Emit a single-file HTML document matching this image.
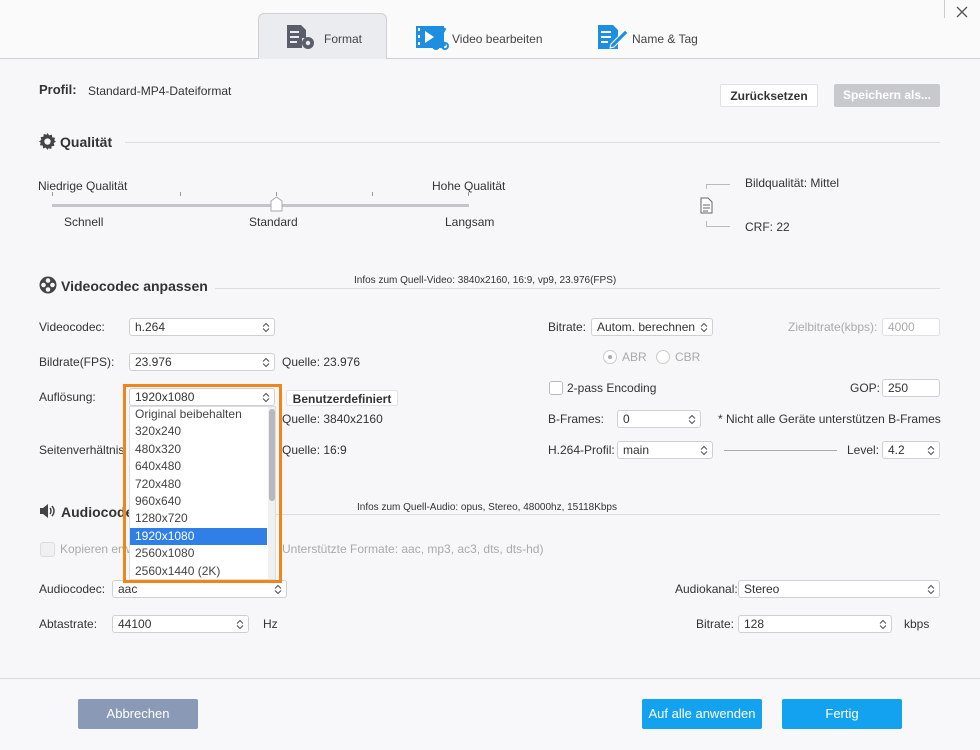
<!DOCTYPE html>
<html><head><meta charset="utf-8"><style>
*{margin:0;padding:0;box-sizing:border-box}
body{width:980px;height:750px;background:#f7f7f9;font-family:"Liberation Sans",sans-serif;font-size:12px;color:#333;position:relative;overflow:hidden}
.a{position:absolute;white-space:nowrap}
.t{position:absolute;white-space:nowrap;line-height:14px}
.sel{position:absolute;background:#fff;border:1px solid #cfd0d4;border-radius:3px;height:18px;line-height:16px;padding-left:5px;font-size:12px;color:#333}
.ar{position:absolute;right:4px;top:3px;width:8px;height:11px}
.h{position:absolute;font-size:14px;font-weight:bold;color:#333;white-space:nowrap}
.line{position:absolute;height:1px;background:#dcdde0}
.btn{position:absolute;color:#fff;text-align:center;font-size:13px;border-radius:2px}
.g{color:#aaa}
.item{height:17.4px;line-height:17.4px;padding-left:5px;font-size:12px;color:#444}
</style></head><body>
<svg width="0" height="0" style="position:absolute"><defs><symbol id="ud" viewBox="0 0 8 11"><path d="M1 4.5L4 1.5 7 4.5M1 6.5L4 9.5 7 6.5" stroke="#555" stroke-width="1.1" fill="none"/></symbol></defs></svg>
<div class="a" style="left:0;top:0;width:980px;height:58px;background:#fafafa"></div>
<div class="line" style="left:0;top:58px;width:980px;background:#d0d0d4"></div>
<div class="a" style="left:258px;top:13px;width:129px;height:46px;background:#ebecef;border:1px solid #d0d0d4;border-bottom:none;border-radius:6px 6px 0 0"></div>
<svg class="a" style="left:286px;top:24px" width="30" height="26" viewBox="0 0 30 26"><path d="M1 1h14l5 5v8h-4v10H1z" fill="#5a5e6b"/><rect x="4" y="7" width="9" height="2" fill="#ebecef"/><rect x="4" y="12" width="9" height="2" fill="#ebecef"/><rect x="4" y="17" width="7" height="2" fill="#ebecef"/><circle cx="22" cy="19" r="6" fill="#5a5e6b"/><circle cx="22" cy="19" r="2.2" fill="#ebecef"/></svg>
<div class="t" style="left:324px;top:32px;color:#444">Format</div>
<svg class="a" style="left:415px;top:24px" width="34" height="26" viewBox="0 0 34 26"><rect x="1" y="2" width="28" height="22" fill="#1e8fe0"/><rect x="3" y="4" width="2" height="3" fill="#fff"/><rect x="3" y="11" width="2" height="3" fill="#fff"/><rect x="3" y="18" width="2" height="3" fill="#fff"/><path d="M10 7l9 6-9 6z" fill="#fff"/><path d="M20 4l10 18M30 4L20 22" stroke="#1e8fe0" stroke-width="3" fill="none"/><circle cx="21" cy="22" r="3" fill="none" stroke="#1e8fe0" stroke-width="2"/><circle cx="30" cy="22" r="3" fill="none" stroke="#1e8fe0" stroke-width="2"/></svg>
<div class="t" style="left:452px;top:32px;color:#444">Video bearbeiten</div>
<svg class="a" style="left:597px;top:24px" width="32" height="26" viewBox="0 0 32 26"><path d="M1 1h15l5 5v19H1z" fill="#1e8fe0"/><rect x="4" y="7" width="10" height="2" fill="#fff"/><rect x="4" y="12" width="10" height="2" fill="#fff"/><rect x="4" y="17" width="7" height="2" fill="#fff"/><path d="M14 20l14-14 3 3-14 14-4 1z" fill="#1e8fe0" stroke="#fff" stroke-width="1"/></svg>
<div class="t" style="left:632px;top:32px;color:#444">Name &amp; Tag</div>
<div class="a" style="left:944px;top:0;width:1px;height:18px;background:#ccc"></div>
<svg class="a" style="left:956px;top:6px" width="12" height="12"><path d="M1 1l10 10M11 1L1 11" stroke="#555" stroke-width="1.3"/></svg>

<div class="t" style="left:39px;top:83px;font-size:13px;font-weight:bold">Profil:</div>
<div class="t" style="left:88px;top:84px">Standard-MP4-Dateiformat</div>
<div class="btn" style="left:720px;top:84px;width:98px;height:23px;line-height:23px;background:#fff;color:#333;font-weight:bold;font-size:12px;border:1px solid #e2e2e6">Zurücksetzen</div>
<div class="btn" style="left:834px;top:84px;width:106px;height:23px;line-height:23px;background:#c8c9cd;font-weight:bold;font-size:12px">Speichern als...</div>

<svg class="a" style="left:39px;top:133px" width="17" height="17" viewBox="0 0 16 16"><path d="M8 0l1.5 2.2 2.6-.7.4 2.6 2.6.4-.7 2.6L16 8l-2.2 1.5.7 2.6-2.6.4-.4 2.6-2.6-.7L8 16l-1.5-2.2-2.6.7-.4-2.6-2.6-.4.7-2.6L0 8l2.2-1.5-.7-2.6 2.6-.4.4-2.6 2.6.7z" fill="#444"/><circle cx="8" cy="8" r="3" fill="#f7f7f9"/></svg>
<div class="h" style="left:60px;top:134px">Qualität</div>
<div class="line" style="left:125px;top:142px;width:815px"></div>
<div class="t" style="left:38px;top:179px">Niedrige Qualität</div>
<div class="t" style="left:432px;top:179px">Hohe Qualität</div>
<div class="a" style="left:52px;top:192px;width:1px;height:4px;background:#999"></div>
<div class="a" style="left:180px;top:192px;width:1px;height:4px;background:#999"></div>
<div class="a" style="left:276px;top:192px;width:1px;height:4px;background:#999"></div>
<div class="a" style="left:372px;top:192px;width:1px;height:4px;background:#999"></div>
<div class="a" style="left:468px;top:192px;width:1px;height:4px;background:#999"></div>
<div class="a" style="left:52px;top:204px;width:417px;height:3px;background:#c4c5c9"></div>
<svg class="a" style="left:270px;top:196px" width="13" height="16"><path d="M1 5l5.5-4 5.5 4v10H1z" fill="#fff" stroke="#aaa"/></svg>
<div class="t" style="left:64px;top:215px">Schnell</div>
<div class="t" style="left:249px;top:215px">Standard</div>
<div class="t" style="left:445px;top:215px">Langsam</div>
<div class="a" style="left:706px;top:184px;width:24px;height:1px;background:#bbb"></div>
<div class="a" style="left:706px;top:184px;width:1px;height:5px;background:#bbb"></div>
<div class="a" style="left:706px;top:226px;width:24px;height:1px;background:#bbb"></div>
<div class="a" style="left:706px;top:221px;width:1px;height:5px;background:#bbb"></div>
<svg class="a" style="left:700px;top:197px" width="13" height="17"><path d="M1 1h7l4 4v11H1z" fill="#fff" stroke="#666"/><path d="M3 8h7M3 11h7M3 14h5" stroke="#666"/></svg>
<div class="t" style="left:745px;top:176px">Bildqualität: Mittel</div>
<div class="t" style="left:745px;top:220px">CRF: 22</div>

<svg class="a" style="left:39px;top:276px" width="18" height="18" viewBox="0 0 18 18"><circle cx="9" cy="9" r="8.5" fill="#444"/><circle cx="9" cy="4.5" r="2.3" fill="#f7f7f9"/><circle cx="9" cy="13.5" r="2.3" fill="#f7f7f9"/><circle cx="4.5" cy="9" r="2.3" fill="#f7f7f9"/><circle cx="13.5" cy="9" r="2.3" fill="#f7f7f9"/></svg>
<div class="h" style="left:61px;top:278px">Videocodec anpassen</div>
<div class="line" style="left:215px;top:288px;width:725px"></div>
<div class="t" style="left:354px;top:274px;font-size:10px">Infos zum Quell-Video: 3840x2160, 16:9, vp9, 23.976(FPS)</div>

<div class="t" style="left:39px;top:320px">Videocodec:</div>
<div class="sel" style="left:129px;top:318px;width:146px">h.264<svg class="ar"><use href="#ud"/></svg></div>
<div class="t" style="left:39px;top:355px">Bildrate(FPS):</div>
<div class="sel" style="left:129px;top:353px;width:146px">23.976<svg class="ar"><use href="#ud"/></svg></div>
<div class="t" style="left:282px;top:355px">Quelle: 23.976</div>
<div class="t" style="left:39px;top:390px">Auflösung:</div>
<div class="btn" style="left:286px;top:390px;width:112px;height:16px;line-height:16px;background:#fff;color:#333;font-weight:bold;font-size:12px;border:1px solid #e2e2e6">Benutzerdefiniert</div>
<div class="t" style="left:282px;top:412px">Quelle: 3840x2160</div>
<div class="t" style="left:39px;top:443px">Seitenverhältnis</div>
<div class="t" style="left:282px;top:443px">Quelle: 16:9</div>

<div class="t" style="left:548px;top:320px">Bitrate:</div>
<div class="sel" style="left:591px;top:318px;width:122px">Autom. berechnen<svg class="ar"><use href="#ud"/></svg></div>
<div class="t g" style="left:788px;top:320px">Zielbitrate(kbps):</div>
<div class="sel g" style="left:882px;top:318px;width:58px;border-color:#e0e0e4">4000</div>
<div class="a" style="left:603px;top:350px;width:14px;height:14px;border:1px solid #ccc;border-radius:50%;background:#fff"></div>
<div class="a" style="left:608px;top:355px;width:4px;height:4px;border-radius:50%;background:#aaa"></div>
<div class="t g" style="left:622px;top:350px">ABR</div>
<div class="a" style="left:656px;top:350px;width:14px;height:14px;border:1px solid #ccc;border-radius:50%;background:#fff"></div>
<div class="t g" style="left:675px;top:350px">CBR</div>
<div class="a" style="left:549px;top:381px;width:14px;height:14px;border:1px solid #bbb;border-radius:3px;background:#fff"></div>
<div class="t" style="left:567px;top:381px">2-pass Encoding</div>
<div class="t" style="left:850px;top:381px">GOP:</div>
<div class="sel" style="left:882px;top:379px;width:58px">250</div>
<div class="t" style="left:548px;top:412px">B-Frames:</div>
<div class="sel" style="left:617px;top:410px;width:84px">0<svg class="ar"><use href="#ud"/></svg></div>
<div class="t" style="left:718px;top:412px">* Nicht alle Geräte unterstützen B-Frames</div>
<div class="t" style="left:548px;top:443px">H.264-Profil:</div>
<div class="sel" style="left:617px;top:441px;width:96px">main<svg class="ar"><use href="#ud"/></svg></div>
<div class="a" style="left:724px;top:450px;width:113px;height:1px;background:#aaa"></div>
<div class="t" style="left:847px;top:443px">Level:</div>
<div class="sel" style="left:882px;top:441px;width:58px">4.2<svg class="ar"><use href="#ud"/></svg></div>

<svg class="a" style="left:39px;top:503px" width="18" height="16" viewBox="0 0 18 16"><path d="M1 5h3l5-4v14l-5-4H1z" fill="#444"/><path d="M11 5q2 3 0 6M13 3q4 5 0 10" stroke="#444" stroke-width="1.5" fill="none"/></svg>
<div class="h" style="left:61px;top:504px">Audiocodec</div>
<div class="line" style="left:200px;top:514px;width:740px"></div>
<div class="t" style="left:357px;top:501px;font-size:10px">Infos zum Quell-Audio: opus, Stereo, 48000hz, 15118Kbps</div>
<div class="a" style="left:40px;top:542px;width:15px;height:15px;border:1px solid #ddd;border-radius:3px;background:#f0f0f2"></div>
<div class="t g" style="left:60px;top:542px">Kopieren erwünscht</div>
<div class="t g" style="left:282px;top:542px">Unterstützte Formate: aac, mp3, ac3, dts, dts-hd)</div>
<div class="t" style="left:39px;top:582px">Audiocodec:</div>
<div class="sel" style="left:112px;top:580px;width:175px">aac<svg class="ar"><use href="#ud"/></svg></div>
<div class="t" style="left:675px;top:582px">Audiokanal:</div>
<div class="sel" style="left:738px;top:580px;width:202px">Stereo<svg class="ar"><use href="#ud"/></svg></div>
<div class="t" style="left:39px;top:617px">Abtastrate:</div>
<div class="sel" style="left:112px;top:615px;width:137px">44100<svg class="ar"><use href="#ud"/></svg></div>
<div class="t" style="left:263px;top:617px">Hz</div>
<div class="t" style="left:696px;top:617px">Bitrate:</div>
<div class="sel" style="left:738px;top:615px;width:154px">128<svg class="ar"><use href="#ud"/></svg></div>
<div class="t" style="left:904px;top:617px">kbps</div>

<div class="a" style="left:0;top:678px;width:980px;height:72px;background:#f8f8fa;border-top:1px solid #d8d8dc"></div>
<div class="btn" style="left:78px;top:699px;width:120px;height:30px;line-height:30px;background:#8a99b5">Abbrechen</div>
<div class="btn" style="left:642px;top:699px;width:120px;height:30px;line-height:30px;background:#13a2ef">Auf alle anwenden</div>
<div class="btn" style="left:782px;top:699px;width:120px;height:30px;line-height:30px;background:#13a2ef">Fertig</div>

<div class="a" style="left:123px;top:384px;width:159px;height:199px;border:3px solid #f0861a"></div>
<div class="sel" style="left:129px;top:388px;width:146px">1920x1080<svg class="ar"><use href="#ud"/></svg></div>
<div class="a" style="left:129px;top:406px;width:147px;height:174px;background:#fff;border:1px solid #ddd;overflow:hidden">
<div style="margin-top:-1px">
<div class="item">Original beibehalten</div>
<div class="item">320x240</div>
<div class="item">480x320</div>
<div class="item">640x480</div>
<div class="item">720x480</div>
<div class="item">960x640</div>
<div class="item">1280x720</div>
<div class="item" style="background:#2f7fe6;color:#fff;margin-right:8px">1920x1080</div>
<div class="item">2560x1080</div>
<div class="item">2560x1440 (2K)</div>
</div>
<div class="a" style="left:138px;top:0;width:8px;height:174px;background:#f0f0f0"></div>
<div class="a" style="left:139px;top:2px;width:6px;height:92px;background:#b8b8bc;border-radius:3px"></div>
</div>
</body></html>
